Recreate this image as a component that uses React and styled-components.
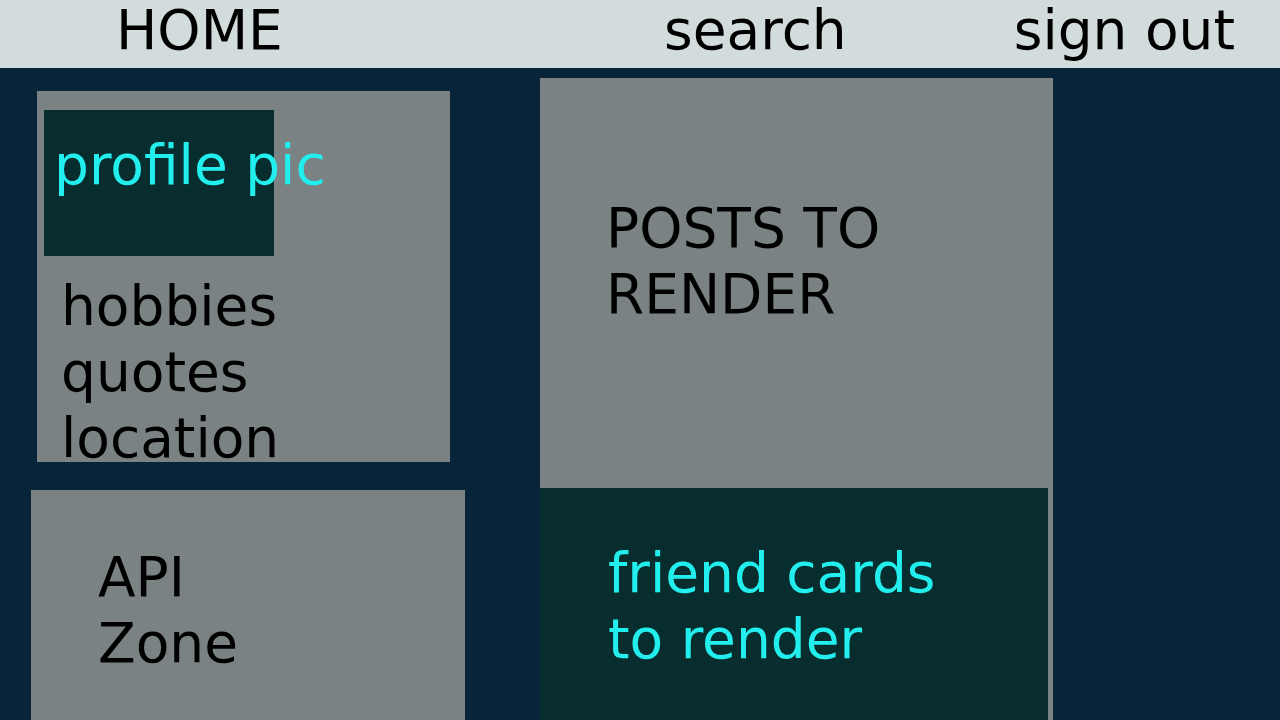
import React from 'react';
import styled, {createGlobalStyle} from "styled-components";

const GlobalStyle = createGlobalStyle`
    html, body {
        margin: 0;
        padding: 0;
        height: 100%;
        overflow: hidden;
    }
    body {
        font-family: "DejaVu Sans", "Liberation Sans", sans-serif;
        background: #072439;
    }
`;

const Wrapper = styled.div`
    height: 100vh;
    display: flex;
    flex-direction: column;
    font-size: 55px;
    line-height: 66px;
    color: #000;
`;

const Nav = styled.nav`
    height: 68px;
    flex-shrink: 0;
    display: flex;
    align-items: flex-start;
    padding: 0 45px 0 116px;
    background: #d3dcdc;
    line-height: 61px;
`;

const NavLink = styled.a`
    display: block;
    color: #000;
    text-decoration: none;
    margin-left: ${props => props.gap || "0px"};
`;

const Spacer = styled.div`
    flex: 1;
`;

const Main = styled.main`
    flex: 1;
    display: flex;
    overflow: hidden;
`;

const LeftColumn = styled.section`
    width: 540px;
    display: flex;
    flex-direction: column;
`;

const ProfileCard = styled.div`
    margin: 23px 0 0 37px;
    width: 413px;
    height: 371px;
    background: #7a8283;
    padding-top: 19px;
    box-sizing: border-box;
`;

const ProfilePic = styled.div`
    margin-left: 7px;
    width: 230px;
    height: 146px;
    background: #072d2e;
    color: #22eeee;
    padding: 23px 0 0 10px;
    box-sizing: border-box;
    white-space: nowrap;
    line-height: 64px;
`;

const Details = styled.ul`
    list-style: none;
    margin: 17px 0 0;
    padding-left: 24px;
`;

const Detail = styled.li``;

const ApiCard = styled.div`
    margin: 28px 0 0 31px;
    width: 434px;
    flex: 1;
    background: #7a8283;
    padding: 54px 0 0 67px;
    box-sizing: border-box;
`;

const BlockText = styled.p`
    margin: 0;
    max-width: ${props => props.width || "none"};
    color: ${props => props.color || "#000"};
`;

const FeedCard = styled.div`
    margin-top: 10px;
    width: 513px;
    display: flex;
    flex-direction: column;
    background: #7a8283;
`;

const Posts = styled.div`
    height: 410px;
    flex-shrink: 0;
    padding: 117px 0 0 66px;
    box-sizing: border-box;
`;

const Friends = styled.div`
    flex: 1;
    width: 508px;
    background: #072d2e;
    padding: 52px 0 0 68px;
    box-sizing: border-box;
`;

export default function App() {
    return (
        <Wrapper>
            <GlobalStyle />
            <Nav>
                <NavLink href="#">HOME</NavLink>
                <Spacer />
                <NavLink href="#">search</NavLink>
                <NavLink href="#" gap="167px">sign out</NavLink>
            </Nav>
            <Main>
                <LeftColumn>
                    <ProfileCard>
                        <ProfilePic>profile pic</ProfilePic>
                        <Details>
                            <Detail>hobbies</Detail>
                            <Detail>quotes</Detail>
                            <Detail>location</Detail>
                        </Details>
                    </ProfileCard>
                    <ApiCard>
                        <BlockText width="200px">API Zone</BlockText>
                    </ApiCard>
                </LeftColumn>
                <FeedCard>
                    <Posts>
                        <BlockText width="400px">POSTS TO RENDER</BlockText>
                    </Posts>
                    <Friends>
                        <BlockText width="360px" color="#22eeee">friend cards to render</BlockText>
                    </Friends>
                </FeedCard>
            </Main>
        </Wrapper>
    );
}
